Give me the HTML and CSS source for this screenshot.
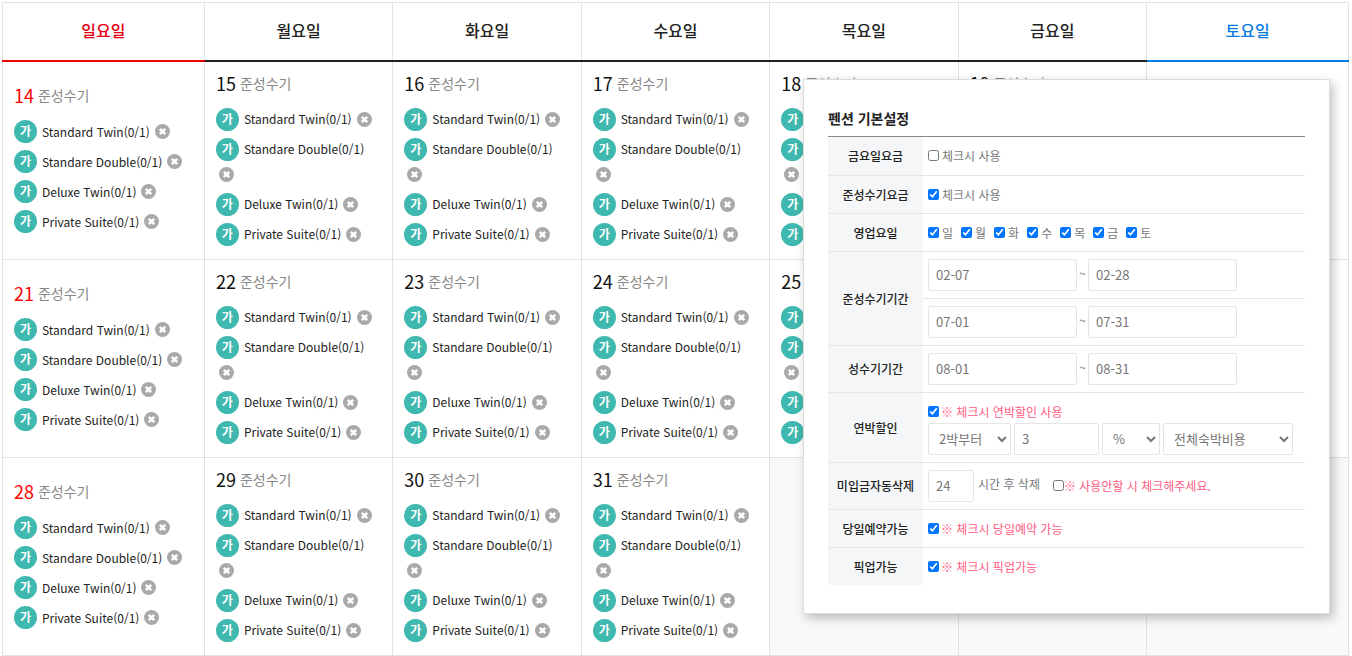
FILE: index.html
```html
<!DOCTYPE html>
<html lang="ko">
<head>
<meta charset="utf-8">
<title>예약 달력</title>
<link rel="stylesheet" href="styles.css">
</head>
<body>
<svg class="sprite" aria-hidden="true">
  <symbol id="close" viewBox="0 0 15 15">
    <circle cx="7.5" cy="7.5" r="7.5" fill="#a9a9a9"/>
    <path d="M4.8 4.8l5.4 5.4M10.2 4.8l-5.4 5.4" stroke="#fff" stroke-width="2.6"/>
  </symbol>
</svg>

<main class="page">
  <table class="calendar">
    <thead>
      <tr>
        <th class="sun" scope="col">일요일</th>
        <th scope="col">월요일</th>
        <th scope="col">화요일</th>
        <th scope="col">수요일</th>
        <th scope="col">목요일</th>
        <th scope="col">금요일</th>
        <th class="sat" scope="col">토요일</th>
      </tr>
    </thead>
    <tbody id="weeks"></tbody>
  </table>

  <section class="settings" aria-labelledby="settings-title">
    <h2 class="settings-title" id="settings-title">펜션 기본설정</h2>
    <table class="form">
      <tr>
        <th scope="row">금요일요금</th>
        <td><label class="check"><input type="checkbox"> 체크시 사용</label></td>
      </tr>
      <tr>
        <th scope="row">준성수기요금</th>
        <td><label class="check"><input type="checkbox" checked> 체크시 사용</label></td>
      </tr>
      <tr>
        <th scope="row">영업요일</th>
        <td>
          <div class="days">
            <label class="check"><input type="checkbox" checked> 일</label>
            <label class="check"><input type="checkbox" checked> 월</label>
            <label class="check"><input type="checkbox" checked> 화</label>
            <label class="check"><input type="checkbox" checked> 수</label>
            <label class="check"><input type="checkbox" checked> 목</label>
            <label class="check"><input type="checkbox" checked> 금</label>
            <label class="check"><input type="checkbox" checked> 토</label>
          </div>
        </td>
      </tr>
      <tr>
        <th scope="row" rowspan="2">준성수기기간</th>
        <td>
          <div class="range">
            <input class="field date" type="text" value="02-07" aria-label="준성수기 시작일 1">
            <span>~</span>
            <input class="field date" type="text" value="02-28" aria-label="준성수기 종료일 1">
          </div>
        </td>
      </tr>
      <tr>
        <td>
          <div class="range">
            <input class="field date" type="text" value="07-01" aria-label="준성수기 시작일 2">
            <span>~</span>
            <input class="field date" type="text" value="07-31" aria-label="준성수기 종료일 2">
          </div>
        </td>
      </tr>
      <tr>
        <th scope="row">성수기기간</th>
        <td>
          <div class="range">
            <input class="field date" type="text" value="08-01" aria-label="성수기 시작일">
            <span>~</span>
            <input class="field date" type="text" value="08-31" aria-label="성수기 종료일">
          </div>
        </td>
      </tr>
      <tr>
        <th scope="row">연박할인</th>
        <td>
          <label class="check note"><input type="checkbox" checked> ※ 체크시 연박할인 사용</label>
          <div class="discount">
            <select class="field nights" aria-label="연박 기준"><option>2박부터</option></select>
            <input class="field amount" type="text" value="3" aria-label="할인 값">
            <select class="field unit" aria-label="할인 단위"><option>%</option></select>
            <select class="field target" aria-label="할인 대상"><option>전체숙박비용</option></select>
          </div>
        </td>
      </tr>
      <tr>
        <th scope="row">미입금자동삭제</th>
        <td>
          <div class="expire">
            <input class="field hours" id="hours" type="text" value="24">
            <label class="hours-label" for="hours">시간 후 삭제</label>
            <label class="check note tight"><input type="checkbox">※ 사용안할 시 체크해주세요.</label>
          </div>
        </td>
      </tr>
      <tr>
        <th scope="row">당일예약가능</th>
        <td><label class="check note"><input type="checkbox" checked> ※ 체크시 당일예약 가능</label></td>
      </tr>
      <tr>
        <th scope="row">픽업가능</th>
        <td><label class="check note"><input type="checkbox" checked> ※ 체크시 픽업가능</label></td>
      </tr>
    </table>
  </section>
</main>
<script src="calendar.js"></script>
</body>
</html>
```

FILE: styles.css
```css
* {
  box-sizing: border-box;
}

body {
  margin: 0;
  background: #fff;
  color: #222;
  font-family: "Noto Sans CJK KR", "Noto Sans", sans-serif;
  font-size: 13px;
}

.sprite {
  display: none;
}

.page {
  position: relative;
  padding: 2px 3px 0 2px;
}

/* Calendar */

.calendar {
  width: 100%;
  border-collapse: collapse;
  table-layout: fixed;
}

.calendar th {
  width: 14%;
  height: 58px;
  padding: 0 0 3px;
  border: 1px solid #e2e2e2;
  border-bottom: 2px solid #222;
  font-size: 16px;
  font-weight: 500;
}

.calendar th.sun {
  width: 15%;
  border-bottom-color: #e60000;
  color: #e60012;
}

.calendar th.sat {
  width: 15%;
  border-bottom-color: #0a7be0;
  color: #0a7be0;
}

.calendar td {
  padding: 7px 11px 12px;
  border: 1px solid #e2e2e2;
}

.calendar td.empty {
  background: #f9f9f9;
}

.day {
  display: flex;
  align-items: center;
  gap: 4px;
  height: 28px;
  margin-bottom: 10px;
  color: #111;
  font-size: 18px;
  line-height: 28px;
}

.day.sun {
  color: #f00;
}

.day.sat {
  color: #0a7be0;
}

.season {
  color: #888;
  font-size: 14px;
}

.rooms {
  display: grid;
  gap: 5px;
  margin: 0;
  padding: 0;
  list-style: none;
}

.room {
  display: flex;
  flex-wrap: wrap;
  align-items: center;
}

.badge {
  width: 23px;
  height: 23px;
  margin: 1px 5px 1px 0;
  border-radius: 50%;
  background: #3fb8af;
  color: #fff;
  font-size: 12px;
  font-weight: 700;
  line-height: 22px;
  text-align: center;
}

.name {
  margin-right: 2px;
  line-height: 22px;
  font-size: 12px;
}

.close {
  width: 15px;
  height: 15px;
  margin: 5px 0 5px 3px;
  padding: 0;
  border: 0;
  background: none;
}

.close svg {
  display: block;
  width: 15px;
  height: 15px;
}

/* Settings panel, floating over the calendar */

.settings {
  position: absolute;
  top: 79px;
  right: 22px;
  width: 527px;
  padding: 27px 24px 28px;
  border: 1px solid #ddd;
  background: #fff;
  box-shadow: 3px 4px 10px rgba(0, 0, 0, 0.25);
}

.settings-title {
  margin: 0;
  padding-bottom: 7px;
  border-bottom: 1px solid #888;
  color: #222;
  font-size: 14px;
  font-weight: 700;
  line-height: 22px;
}

.form {
  width: 100%;
  border-collapse: collapse;
  color: #777;
  font-size: 12px;
}

.form th {
  width: 95px;
  padding: 0;
  background: #f4f6f8;
  color: #222;
  font-weight: 500;
}

.form td {
  height: 38px;
  padding: 7px 5px;
}

.form tr + tr > * {
  border-top: 1px solid #e5e5e5;
}

.check {
  display: flex;
  align-items: center;
  gap: 3px;
  line-height: 23px;
}

.check input {
  width: 11px;
  height: 11px;
  margin: 0;
}

.note {
  gap: 2px;
  color: #ff5c7f;
}

.tight {
  gap: 0;
}

.days {
  display: flex;
  gap: 8px;
}

.range,
.discount,
.expire {
  display: flex;
}

.range span {
  width: 11px;
  line-height: 28px;
  text-align: center;
}

.field {
  height: 32px;
  padding: 0 7px;
  border: 1px solid #e5e5e5;
  border-radius: 2px;
  background: #fff;
  color: #777;
  font-family: inherit;
  font-size: 13px;
}

.date {
  width: 149px;
}

.discount {
  gap: 3px;
}

.discount select {
  padding-left: 6px;
}

.nights {
  width: 83px;
}

.amount {
  width: 85px;
}

.unit {
  width: 58px;
}

.target {
  width: 130px;
}

.hours {
  width: 46px;
}

.hours-label {
  margin: 0 13px 0 4px;
  line-height: 28px;
}
```

FILE: calendar.js
```javascript
const rooms = ["Standard Twin", "Standare Double", "Deluxe Twin", "Private Suite"];
const firstDay = 14;
const lastDay = 31;
const body = document.getElementById("weeks");

const roomItem = (room) =>
  `<li class="room"><span class="badge">가</span><span class="name">${room}(0/1)</span>` +
  `<button class="close" type="button" aria-label="${room} 닫기"><svg><use href="#close"/></svg></button></li>`;

for (let start = firstDay; start <= lastDay; start += 7) {
  const week = body.insertRow();
  for (let i = 0; i < 7; i += 1) {
    const cell = week.insertCell();
    const date = start + i;
    if (date > lastDay) {
      cell.className = "empty";
      continue;
    }
    const tone = i === 0 ? " sun" : i === 6 ? " sat" : "";
    cell.innerHTML =
      `<div class="day${tone}">${date}<span class="season">준성수기</span></div>` +
      `<ul class="rooms">${rooms.map(roomItem).join("")}</ul>`;
  }
}
```
